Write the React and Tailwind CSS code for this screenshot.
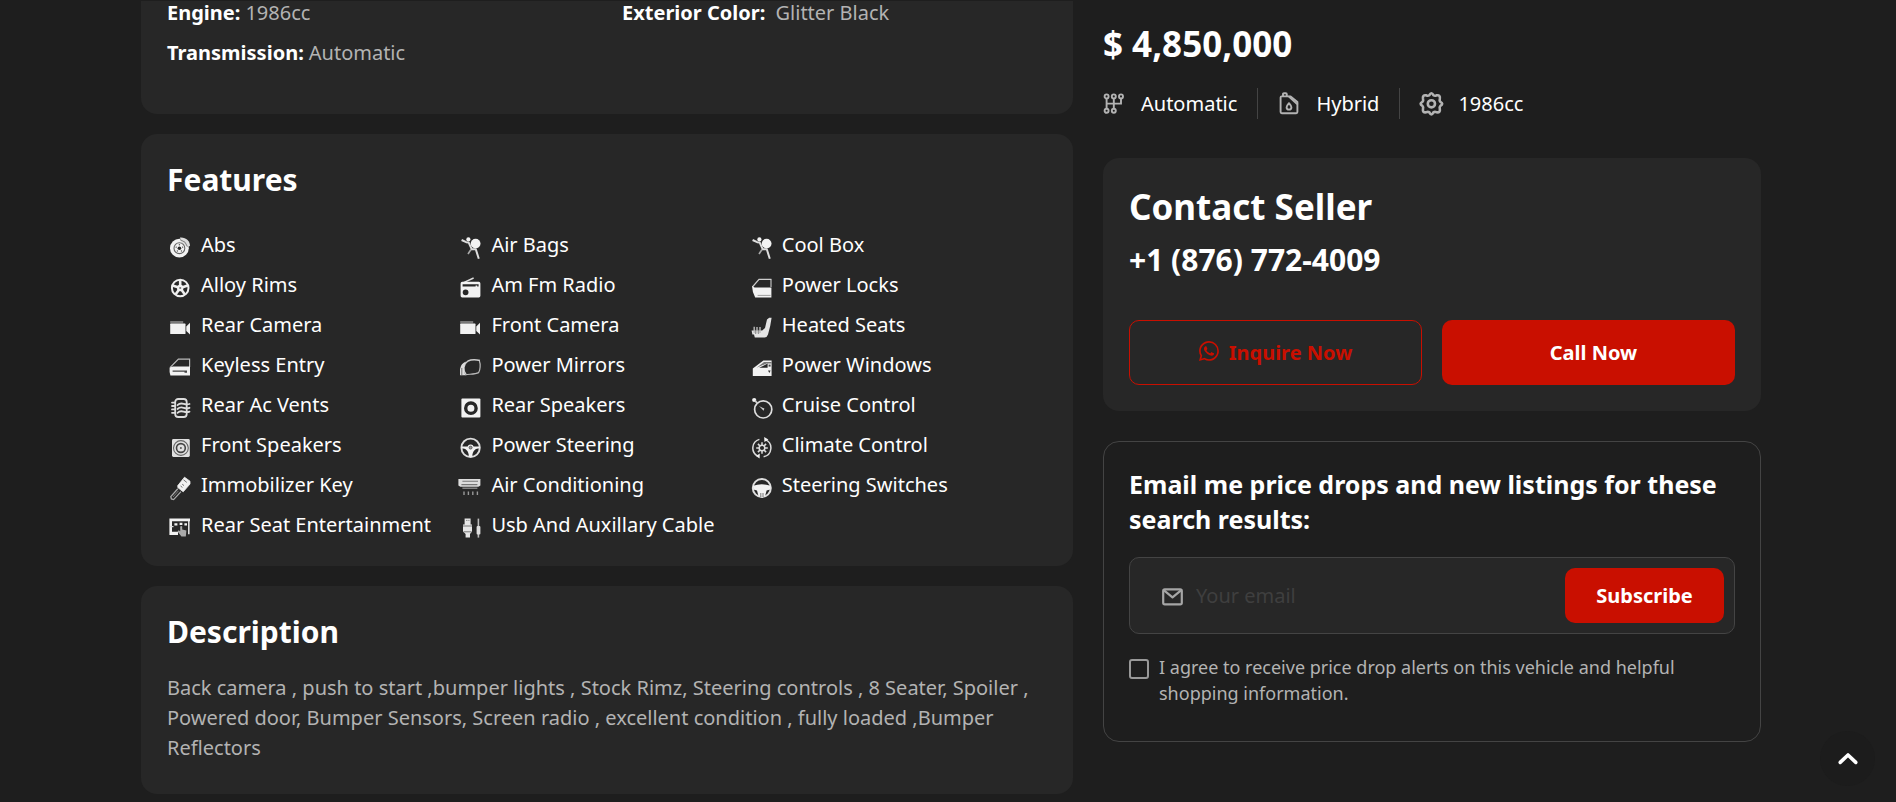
import React from "react";
import { BsWhatsapp } from "react-icons/bs";

const BG = "#272727";

const Icon = ({ children }) => (
  <svg viewBox="0 0 22 24" className="mt-[7px] h-6 w-[22px] shrink-0 overflow-visible" fill="#f2f2f2" aria-hidden="true">
    {children}
  </svg>
);

const spokes = [0, 72, 144, 216, 288];

const camera = (
  <>
    <rect x="1.2" y="4" width="13" height="2.4" fill="#777" />
    <rect x="1.2" y="6.6" width="15.3" height="10.4" rx="0.6" />
    <path d="M17.3 9.6 21 5.8V17.4L17.3 14Z" />
  </>
);

const airbag = (
  <>
    <circle cx="16.6" cy="6.6" r="4.9" />
    <circle cx="9.4" cy="2.4" r="2.1" />
    <path d="M2.6 3 7.2 5.2 9.6 5.4 12.8 12.3H16.8L19.8 21.8" fill="none" stroke="#ddd" strokeWidth="2" strokeLinejoin="round" />
    <path d="M12 12.5 9 17" fill="none" stroke="#aaa" strokeWidth="1.6" />
  </>
);

const icons = {
  abs: (
    <>
      <circle cx="10.4" cy="11.2" r="9.4" />
      <path d="M11 .5C17 0 21 4 21 9L17.5 10 12 5Z" fill="#ddd" />
      <path d="M11 2.6 16 5.2 18.4 9.6" fill="none" stroke="#666" strokeWidth=".8" />
      <circle cx="10.4" cy="11.2" r="5.4" fill="none" stroke="#666" strokeWidth="1.1" />
      <circle cx="10.4" cy="11.2" r="1.8" fill={BG} />
      {spokes.map((a) => (
        <circle key={a} cx="10.4" cy="7.8" r=".7" fill="#555" transform={`rotate(${a} 10.4 11.2)`} />
      ))}
    </>
  ),
  rims: (
    <>
      <circle cx="11.2" cy="11" r="8.3" fill="none" stroke="#eee" strokeWidth="2" />
      {spokes.map((a) => (
        <path key={a} d="M11.2 11V3" stroke="#eee" strokeWidth="2.6" transform={`rotate(${a} 11.2 11)`} />
      ))}
      <circle cx="11.2" cy="11" r="3.2" />
      <circle cx="11.2" cy="11" r="1.1" fill="#777" />
    </>
  ),
  camera,
  keyless: (
    <>
      <path d="M1.2 10.4 9.4 2.2H20.6V10" fill="none" stroke="#bbb" strokeWidth="1.2" />
      <path d="M.6 10.6 4 9.6H21V18.4H1.4Q.2 15 .6 10.6Z" />
      <path d="M3.6 13.4H18V15.8H15.5V14.8H3.6Z" fill="#444" />
    </>
  ),
  vents: (
    <g fill="none" stroke="#ddd" strokeWidth="1.8" strokeLinecap="round">
      <rect x="6.2" y="2" width="11.5" height="18" rx="3" />
      <path d="M3 5.6H6M3 9H6M3 12.4H6M3 15.8H6" />
      <path d="M8.5 8.2C13 3.8 15 9 20.5 7M8.5 12C13 7.8 15 13 20.5 10.8M8.5 15.8C13 11.6 15 16.8 20.5 14.6" />
    </g>
  ),
  speakersFront: (
    <>
      <path d="M3 3.4Q3 2 4.4 2H19.4Q20.8 2 20.8 3.4V18.6Q20.8 20 19.4 20H4.4Q3 20 3 18.6Z" fill="#e0e0e0" />
      <circle cx="11.9" cy="11" r="7.4" fill="none" stroke="#666" strokeWidth="1.1" />
      <circle cx="11.9" cy="11" r="4.4" fill="none" stroke="#444" strokeWidth="1.6" />
      <circle cx="11.9" cy="11" r="1" fill="#555" />
    </>
  ),
  key: (
    <>
      <path d="M15.5.2 21 4.2V7L14.2 14.8 8.8 10.6V8.6Z" stroke="#f2f2f2" strokeWidth=".8" strokeLinejoin="round" />
      <path d="M8.8 11.8 1.8 19.6 2.4 22 4.6 22.6 12 14.6" fill="none" stroke="#aaa" strokeWidth="1.3" />
      <path d="M9.5 13.8 4 20" stroke="#777" />
      <path d="M14.5 2.8 17.8 5.4M11.6 9 13.4 10.4M13.2 7.2 15 8.6" stroke="#777" strokeWidth="1" />
    </>
  ),
  entertainment: (
    <>
      <path d="M.4 1.4H21V4.2H3V14.8H9V18H.4Z" />
      <path d="M1 9.6H4.5" stroke="#ddd" strokeWidth="1.2" />
      <path d="M19.8 4V17.2" stroke="#ddd" strokeWidth="1.6" />
      <path d="M5.4 6.2H8.4V8.4H5.4ZM15.4 6.2H18V8.4H15.4ZM10.6 5.8H13.4V8H10.6Z" />
      <path d="M11.2 9.4Q12.2 8.6 13.2 9.4V12.4L17.4 13.4 16.8 19.6H12.4L8.6 14.6 9.6 13.2 11.2 14.2Z" fill="#aaa" />
    </>
  ),
  airbag,
  radio: (
    <>
      <path d="M4 5.8 14.6 1" stroke="#ddd" strokeWidth="1.4" />
      <path fillRule="evenodd" d="M3.2 4.8H19.8Q21.4 4.8 21.4 6.4V18.8Q21.4 20.4 19.8 20.4H3.2Q1.6 20.4 1.6 18.8V6.4Q1.6 4.8 3.2 4.8ZM3.6 7.2V9.6H16.6V8.6H18.2V9.6H19.6V7.2ZM6.6 12.4A2.9 2.9 0 1 0 6.6 18.2 2.9 2.9 0 1 0 6.6 12.4Z" />
    </>
  ),
  mirror: (
    <>
      <path d="M7 17.4C3.6 13 4 7.4 9 4 13 2 17 2.6 21 3.4" fill="none" stroke="#ccc" strokeWidth="1.5" />
      <path d="M6.2 17.8C10 17 16 17.4 19.6 15.6 21.4 13 21.6 7 20.4 4" fill="none" stroke="#bbb" strokeWidth="1.2" />
      <path d="M1 18.2 1 12Q2 6.5 7 4.6 3.4 11 6.4 18.2Z" fill="#ddd" />
      <path d="M2.8 18V11" stroke="#555" strokeWidth=".8" />
    </>
  ),
  speakersRear: (
    <>
      <rect x="2.4" y="1.6" width="19" height="19" rx="1" />
      <circle cx="11.9" cy="11.2" r="5.2" fill="none" stroke={BG} strokeWidth="3.4" />
    </>
  ),
  steering: (
    <>
      <circle cx="11.6" cy="10.8" r="9.2" fill="none" stroke="#ddd" strokeWidth="1.9" />
      <path d="M2.6 9.4H20.6V11.4C16.6 11.4 13.6 13 13.2 19.8H10C9.6 13 6.6 11.4 2.6 11.4Z" />
      <circle cx="11.6" cy="10.6" r="3" />
      <circle cx="11.6" cy="10.6" r="1.5" fill="#999" stroke="#444" strokeWidth=".7" />
    </>
  ),
  airConditioning: (
    <>
      <path d="M-.6 2H21.4V8.6L19.4 9.8H1.4L-.6 8.6Z" fill="#ddd" />
      <path d="M3.4 4.2H19M2.4 7.6H18.4" stroke="#777" strokeWidth="1.1" />
      <path d="M3.4 11.2H18.4" stroke="#999" strokeWidth="1.2" />
      <path d="M5 14.4V18M9.4 14.4V18M13.8 14.4V18M18.4 14.4V18" stroke="#999" strokeWidth="1.4" />
    </>
  ),
  cable: (
    <>
      <path d="M5.6 1.6H11.6V7.4H13V14.4L11 17V20.4H6.6V17L4 14.4V7.4H5.6Z" fill="#e6e6e6" />
      <path d="M7.2 3.4H8.4M9.4 3.4H10.4M4 9H13M4.6 14.8H12.6" stroke="#777" />
      <path d="M19.4 1.6V20.6" stroke="#bbb" strokeWidth="1.6" />
      <rect x="17.6" y="9" width="3.8" height="8.6" rx="1" fill="#ddd" />
    </>
  ),
  locks: (
    <>
      <path d="M2.4 10 9 2.4H21.4" fill="none" stroke="#ccc" strokeWidth="1.2" />
      <path d="M21 2.4V10" stroke="#ddd" />
      <path d="M2 9 4.6 10.4H21.4V20.4H5.2Q2.2 15 2 9Z" />
      <path d="M7.6 18.4H20.6" stroke="#888" strokeWidth=".8" />
    </>
  ),
  seats: (
    <>
      <path d="M19.2.8H21.6Q20.6 9 18 17.6 17.2 20.4 14.6 20.4H4.8L4 17.6H2.4L1.6 13.6H12.2L15 11 17 2.4Z" fill="#e4e4e4" />
      <path d="M4.2 9.8V16M7 10V16.4M10 10V16" stroke="#bbb" strokeWidth="1.4" />
      <path d="M5.6 12.8V17M8.6 12.8V17" stroke="#777" strokeWidth=".8" />
    </>
  ),
  windows: (
    <>
      <path d="M2.8 11.4 13.4 3.4H21.6V19H2.8Z" />
      <path d="M6.6 10.8 14 5H21.6V6.4H16.6Z" fill="#777" />
      <path d="M9.2 10.8 17.6 6.6V10.8Z" fill={BG} />
      <rect x="18.6" y="7.6" width="2" height="2" fill="#444" />
      <path d="M18 13.6H20.6L19.4 16Z" fill="#333" />
    </>
  ),
  cruise: (
    <>
      <circle cx="13.2" cy="12.4" r="8.6" fill="none" stroke="#ddd" strokeWidth="1.7" />
      <circle cx="4.2" cy="3" r="2.1" />
      <path d="M4.8 3.6 7.4 6.2" stroke="#ccc" strokeWidth="1.8" />
      <path d="M9 9 14.4 11.6 13.6 13.8Z" fill="#ccc" />
    </>
  ),
  climate: (
    <>
      <g fill="none" stroke="#ddd" strokeWidth="1.5">
        <path d="M9.4 2.4A9 9 0 0 0 7.6 19M15.2 2.6A9 9 0 0 1 13.6 19.8" />
        <circle cx="12" cy="11" r="2.8" />
        {[0, 45, 90, 135, 180, 225, 270, 315].map((a) => (
          <path key={a} d="M12 8V5.2" strokeWidth="1.5" transform={`rotate(${a} 12 11)`} />
        ))}
      </g>
      <path d="M14.2 0 18.4 2.6 14.4 5ZM9.8 16.6 6 19 9.6 21.6Z" />
    </>
  ),
  switches: (
    <>
      <circle cx="11.8" cy="11" r="9" fill="none" stroke="#ddd" strokeWidth="2" />
      <path d="M3 8.8Q11.8 5.8 20.6 8.8L20.2 12.4 16.6 13.4 15 19.4H8.6L7 13.4 3.4 12.4Z" />
      <path d="M10.8 16V20M13 16V20" stroke="#777" strokeWidth="1" />
    </>
  ),
};

const features = [
  ["Abs", "abs"], ["Air Bags", "airbag"], ["Cool Box", "airbag"],
  ["Alloy Rims", "rims"], ["Am Fm Radio", "radio"], ["Power Locks", "locks"],
  ["Rear Camera", "camera"], ["Front Camera", "camera"], ["Heated Seats", "seats"],
  ["Keyless Entry", "keyless"], ["Power Mirrors", "mirror"], ["Power Windows", "windows"],
  ["Rear Ac Vents", "vents"], ["Rear Speakers", "speakersRear"], ["Cruise Control", "cruise"],
  ["Front Speakers", "speakersFront"], ["Power Steering", "steering"], ["Climate Control", "climate"],
  ["Immobilizer Key", "key"], ["Air Conditioning", "airConditioning"], ["Steering Switches", "switches"],
  ["Rear Seat Entertainment", "entertainment"], ["Usb And Auxillary Cable", "cable"],
];

const GearShift = () => (
  <svg viewBox="0 0 24 24" className="h-6 w-6" fill="none" stroke="#b3b3b3" strokeWidth="1.9" aria-hidden="true">
    <circle cx="3.6" cy="4.4" r="2" />
    <circle cx="10.8" cy="4.4" r="2" />
    <circle cx="18" cy="4.4" r="2" />
    <circle cx="3.6" cy="18.8" r="2" />
    <circle cx="10.8" cy="18.8" r="2" />
    <path d="M3.6 6.4V16.8M10.8 6.4V16.8M18 6.4V11.6H3.6" />
  </svg>
);

const FuelCan = () => (
  <svg viewBox="0 0 24 24" className="h-6 w-6" fill="none" stroke="#b3b3b3" strokeWidth="1.9" strokeLinejoin="round" aria-hidden="true">
    <path d="M2.6 5.4Q2.6 4.4 3.6 4.4H10.6L19.4 12.2V20Q19.4 21.2 18.2 21.2H3.8Q2.6 21.2 2.6 20Z" />
    <path d="M5 4.2V2.2Q5 1.2 6 1.2H7.8Q8.8 1.2 8.8 2.2V4.2M10.6 4.4H12.6L19.4 10V12.2" />
    <path d="M11 11.2Q13.4 14 13.4 15.2A2.4 2.4 0 0 1 8.6 15.2Q8.6 14 11 11.2Z" />
  </svg>
);

const Gear = () => (
  <svg viewBox="0 0 24 24" className="h-6 w-6 overflow-visible" fill="none" stroke="#b3b3b3" strokeWidth="2.6" strokeLinejoin="round" aria-hidden="true">
    <path d="M9.4 3.2Q11.4 -.8 13.4 3.2 14.8 4.2 16.4 3.4 20.6 2.6 19.8 6.8 19.2 8.6 20.4 9.8 24 11.8 20.4 13.8 19.2 15 19.8 16.8 20.6 21 16.4 20.2 14.8 19.4 13.4 20.4 11.4 24.4 9.4 20.4 8 19.4 6.4 20.2 2.2 21 3 16.8 3.6 15 2.4 13.8 -1.2 11.8 2.4 9.8 3.6 8.6 3 6.8 2.2 2.6 6.4 3.4 8 4.2 9.4 3.2Z" />
    <circle cx="11.4" cy="11.8" r="3.6" />
  </svg>
);

const specs = [
  ["Automatic", GearShift],
  ["Hybrid", FuelCan],
  ["1986cc", Gear],
];

const Detail = ({ label, value }) => (
  <div className="flex gap-[5px]">
    <dt className="font-bold">{label}</dt>
    <dd className="text-[#b3b3b3]">{value}</dd>
  </div>
);

export default function App() {
  return (
    <div className="min-h-screen bg-[#1e1e1e] pt-px pr-[135px] pb-2 pl-[141px] font-['Noto_Sans',sans-serif] text-xl text-white">
      <main className="grid grid-cols-[932fr_658fr] items-start gap-x-[30px]">
        <div className="flex flex-col gap-5">
          <section className="rounded-b-2xl bg-[#272727] px-[26px] pt-px pb-[50px]">
            <dl className="grid grid-cols-2 gap-x-[30px] gap-y-[18px] leading-[22px]">
              <Detail label="Engine:" value="1986cc" />
              <Detail label="Exterior Color:" value={"\u00a0Glitter Black"} />
              <Detail label="Transmission:" value="Automatic" />
            </dl>
          </section>

          <section className="rounded-2xl bg-[#272727] px-[26px] pt-7 pb-4">
            <h2 className="mb-8 text-[30px] leading-9 font-bold">Features</h2>
            <ul className="grid grid-cols-[33%_33%_33%]">
              {features.map(([name, icon]) => (
                <li key={name} className="flex h-10 items-start gap-[10px] pl-[2px] leading-[30px] whitespace-nowrap">
                  <Icon>{icons[icon]}</Icon>
                  {name}
                </li>
              ))}
            </ul>
          </section>

          <section className="rounded-2xl bg-[#272727] px-[26px] pt-7 pb-[31px]">
            <h2 className="mb-[23px] text-[30px] leading-9 font-bold">Description</h2>
            <p className="leading-[30px] text-[#b3b3b3]">
              Back camera , push to start ,bumper lights , Stock Rimz, Steering controls , 8 Seater, Spoiler , Powered
              door, Bumper Sensors, Screen radio , excellent condition , fully loaded ,Bumper Reflectors
            </p>
          </section>
        </div>

        <aside className="pt-[23px]">
          <h1 className="text-[35px] leading-10 font-bold">$ 4,850,000</h1>
          <ul className="mt-6 flex divide-x divide-[#444] leading-[31px]">
            {specs.map(([text, SpecIcon]) => (
              <li key={text} className="flex items-center gap-[14px] px-5 first:pl-0">
                <SpecIcon />
                {text}
              </li>
            ))}
          </ul>

          <section className="mt-[39px] rounded-2xl bg-[#272727] px-[26px] pt-[29px] pb-[26px]">
            <h2 className="text-[35px] leading-10 font-bold">Contact Seller</h2>
            <p className="mt-[15px] text-[30px] leading-9 font-bold">+1 (876) 772-4009</p>
            <div className="mt-[42px] grid grid-cols-2 gap-5">
              <button type="button" className="flex h-[65px] items-center justify-center gap-[10px] rounded-[10px] border border-[#c90f00] font-bold text-[#c90f00]">
                <BsWhatsapp className="mb-1 h-5 w-5" />
                Inquire Now
              </button>
              <button type="button" className="h-[65px] rounded-[10px] bg-[#c90f00] pl-[10px] font-bold">
                Call Now
              </button>
            </div>
          </section>

          <form className="mt-[30px] rounded-2xl border border-[#444] px-[25px] pt-[25px] pb-[35px]" onSubmit={(e) => e.preventDefault()}>
            <h2 className="text-[25px] leading-[35px] font-bold">
              Email me price drops and new listings for these search results:
            </h2>
            <div className="mt-5 flex h-[77px] items-center rounded-[10px] border border-[#444] bg-[#272727] pr-[10px] pl-8">
              <svg viewBox="0 0 22 18" className="mt-[2px] h-[18px] w-[22px] shrink-0" fill="none" stroke="#a6a6a6" strokeWidth="2.2" strokeLinejoin="round" aria-hidden="true">
                <rect x="1.2" y="1.4" width="18.6" height="15" rx="1.6" />
                <path d="M2 2.4 10.5 9.4 19 2.4" />
              </svg>
              <input
                type="email"
                aria-label="Your email"
                placeholder="Your email"
                className="ml-3 h-[55px] min-w-0 flex-1 bg-transparent outline-none placeholder:text-[#3f3f3f]"
              />
              <button type="submit" className="h-[55px] w-[159px] rounded-[10px] bg-[#c90f00] font-bold">
                Subscribe
              </button>
            </div>
            <label className="mt-5 flex items-start gap-[10px] text-lg leading-[26px] text-[#b3b3b3]">
              <input type="checkbox" className="mt-[5px] h-5 w-5 shrink-0 appearance-none rounded-[3px] border-2 border-[#999] checked:bg-[#c90f00]" />
              I agree to receive price drop alerts on this vehicle and helpful shopping information.
            </label>
          </form>
        </aside>
      </main>

      <button type="button" aria-label="Back to top" className="fixed right-[21px] bottom-4 flex h-[55px] w-[55px] items-center justify-center rounded-full bg-[#1c1c1c]">
        <svg viewBox="0 0 22 14" className="h-[14px] w-[22px]" fill="none" stroke="#fff" strokeWidth="3.6" strokeLinecap="round" strokeLinejoin="round" aria-hidden="true">
          <path d="M3.2 10.4 11 3 18.8 10.4" />
        </svg>
      </button>
    </div>
  );
}
